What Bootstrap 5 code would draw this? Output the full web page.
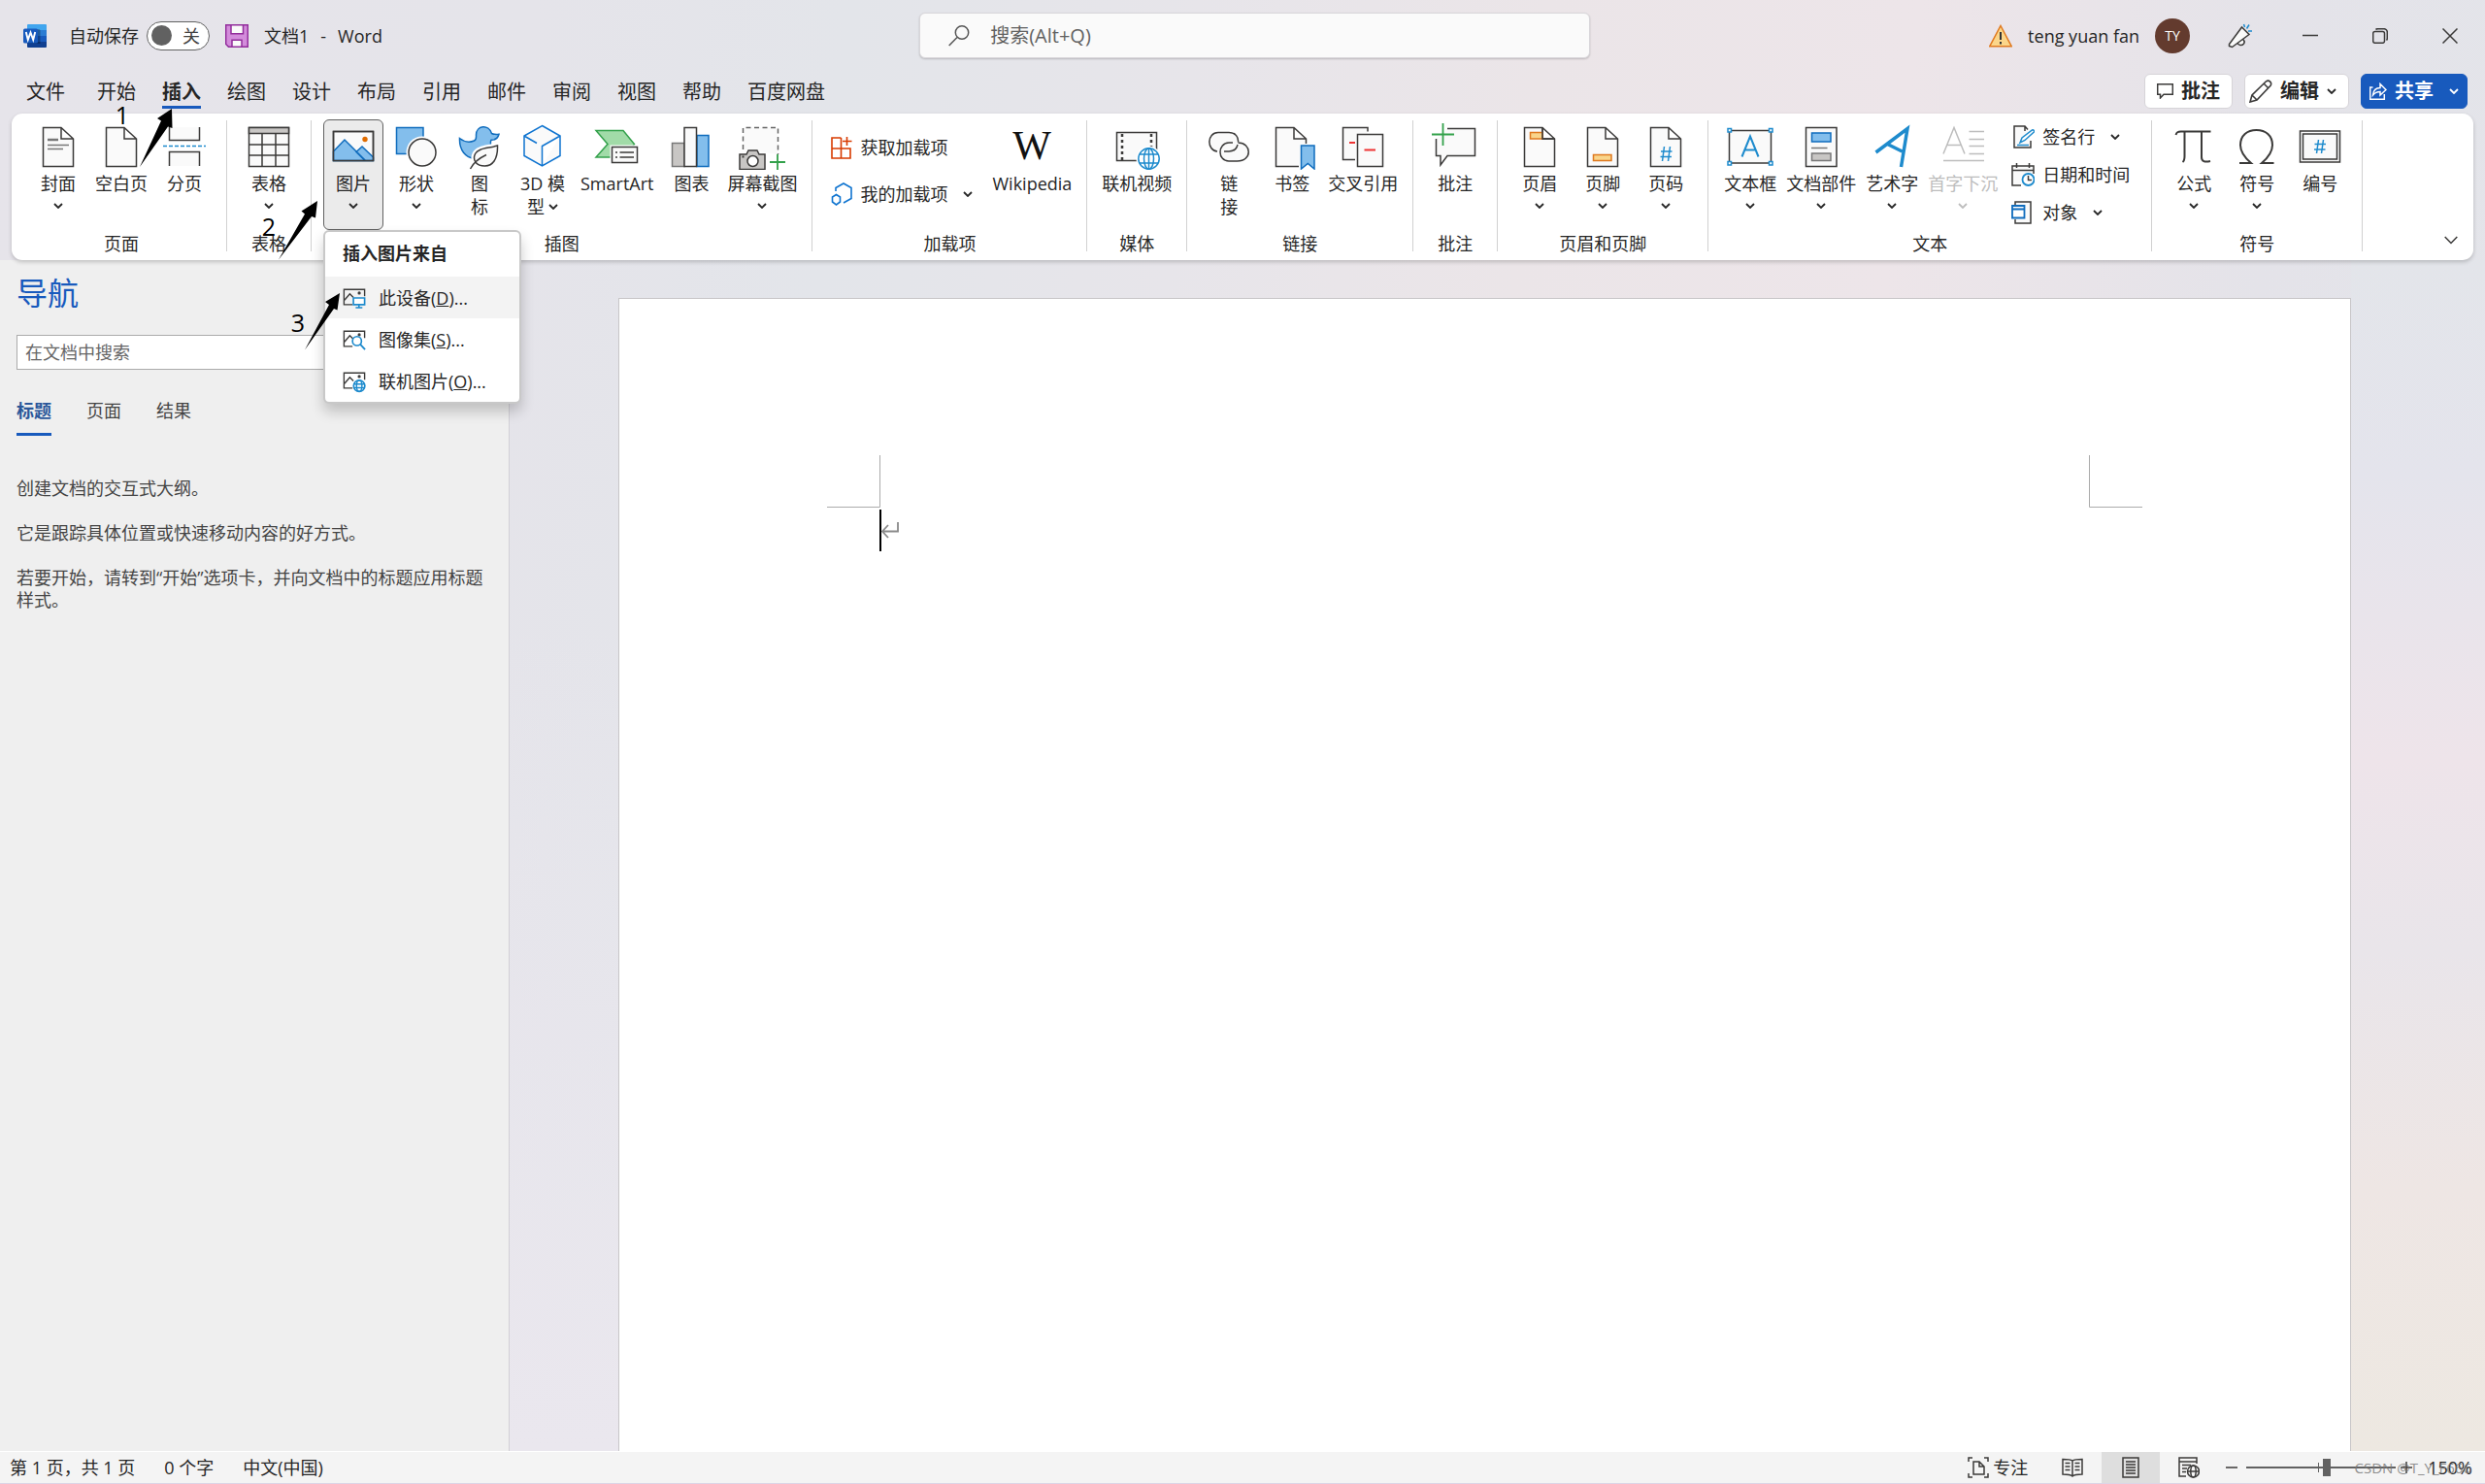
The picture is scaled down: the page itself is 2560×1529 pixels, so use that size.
<!DOCTYPE html>
<html lang="zh-CN">
<head>
<meta charset="utf-8">
<meta name="viewport" content="width=device-width, initial-scale=1">
<title>文档1 - Word</title>
<link href="https://cdn.jsdelivr.net/npm/bootstrap@5.3.0/dist/css/bootstrap.min.css" rel="stylesheet">
<style>
  :root { --ink:#262626; --brand:#185abd; --line:#3b3a39; --blue:#1e8bcd; --deep:#0f6cbd; }
  body {
    font-family:"Open Sans","Noto Sans CJK SC",sans-serif; font-size:18px; line-height:24px; color:var(--ink);
    background:linear-gradient(97deg,#e6e4ea 0,#e5e4ea 20%,#e3e5ea 32%,#e7e5ea 45%,#ebe5e8 58%,#ede5e9 72%,#e4e3e9 86%,#e3e5ea 100%);
  }
  svg { display:block; flex:none; fill:none; stroke:var(--line); stroke-width:1.5; }
  button { font:inherit; color:inherit; }
  a { color:inherit; text-decoration:none; }
  .plain { background:none; border:0; padding:0; }
  .chev { width:10px; height:6px; stroke:var(--ink); stroke-width:1.8; }

  /* title bar */
  .titlebar { height:73px; }
  .tb-left { width:37%; padding-left:24px; }
  .tb-left .lbl { margin-left:23px; }
  .tb-search { width:27%; height:47px; background:#fafafa; border:1px solid #d8d6da; border-radius:6px; box-shadow:0 1px 2px #0003; padding-left:29px; gap:19px; }
  .tb-search input { font-size:20px; background:none; border:0; outline:0; color:var(--ink); }
  .tb-search input::placeholder { color:#616161; opacity:1; }
  .pill { width:65px; height:30px; border:1px solid #616161; border-radius:15px; background:#fff; padding:0 9px 0 4px; color:#424242; }
  .pill input { appearance:none; width:21px; height:21px; border-radius:50%; background:#616161; margin:0; }
  .avatar { width:36px; height:36px; border-radius:50%; background:#633b2e; color:#fff; font-size:14px; }
  .winbtn { width:72px; height:48px; }

  /* tabs */
  .tabs { height:44px; padding:0 18px 0 27px; font-size:20px; }
  .tabs nav { gap:27px; }
  .tabs nav a { height:39px; line-height:43px; white-space:nowrap; }
  .tabs nav a:first-child { margin-right:6px; }
  .tabs nav a.on { font-weight:700; border-bottom:3px solid var(--brand); }
  .acts { gap:12px; padding-top:3px; }
  .actbtn { height:36px; background:#fff; border:1px solid #d6d4d8; border-radius:6px; font-size:20px; font-weight:700; line-height:32px; }
  .actbtn.share { background:var(--brand); border-color:var(--brand); color:#fff; }
  .share svg { stroke:#fff; }

  /* ribbon */
  .ribbon { margin:0 12px; background:#fff; border-radius:11px; box-shadow:0 2px 4px #0003; padding-left:5px; height:151px; z-index:2; }
  .grp { padding:6px 12px 0; border-right:1px solid transparent; position:relative; }
  .grp::after { content:""; position:absolute; right:-1px; top:7px; bottom:9px; width:1px; background:#d1d1d1; }
  .items { gap:3px; height:114px; }
  .grp-name { margin-top:2px; text-align:center; }
  .big { min-width:62px; height:114px; padding:3px 2px 0; border:1px solid transparent; border-radius:6px; background:none; white-space:nowrap; display:flex; flex-direction:column; align-items:center; }
  .big > svg:first-child { width:48px; height:48px; margin-bottom:2px; }
  .big .chev { margin-top:8px; }
  .big.open { background:#ebebeb; border-color:#616161; }
  .big:disabled { color:#bdbdbd; }
  .big:disabled svg { stroke:#bdbdbd; }
  .addins { width:167px; padding:17px 0 0 7px; gap:24px; }
  .texttools { width:140px; padding:6px 0 0 8px; gap:15px; }
  .picmenu { min-width:204px; padding:0; border:2px solid #c8c8c8; border-radius:6px; box-shadow:0 8px 14px #0003; font-size:18px; margin:0; overflow:hidden; }
  .picmenu h6 { font-size:18px; line-height:24px; font-weight:700; color:var(--ink); margin:0; padding:10px 18px 12px; }
  .picmenu .dropdown-item { height:43px; padding:0 18px; gap:13px; color:var(--ink); }
  .picmenu .dropdown-item.hot { background:#f3f3f3; }

  /* navigation pane */
  .navpane { width:525px; background:#efefef; border-right:1px solid #d2d0d6; padding:14px 17px 0; color:#444; }
  .navpane h2 { font-size:32px; line-height:40px; color:var(--brand); margin:0 0 23px; font-weight:400; }
  .navpane input { height:36px; border:1px solid #ababab; background:#fff; padding:0 8px; width:100%; font-size:18px; outline:0; border-radius:0; }
  .navpane input::placeholder { color:#666; opacity:1; }
  .ptabs { gap:36px; margin:30px 0 43px; }
  .ptabs a { padding:0 0 11px; border-bottom:3px solid transparent; }
  .ptabs a.on { color:#2b579a; font-weight:700; border-color:var(--brand); }
  .navpane p { line-height:23px; margin:0 0 23px; }

  /* document */
  .canvas { padding:39px 138px 0 112px; background:linear-gradient(#e3e5ea 0,#e4e4ec 18%,#eee4ea 42%,#e9e5ea 58%,#eee6e4 78%,#ede8e1 100%) right/138px 100% no-repeat,linear-gradient(#e4e3ea00 30%,#eae7ee) left/112px 100% no-repeat; }
  .sheet { background:#fff; border:1px solid #c8c6c8; border-bottom:0; padding:161px 214px 0; }
  .caretline { padding-left:54px; margin-top:2px; }
  .caret { width:2px; height:43px; background:#000; }

  /* status bar */
  .status { height:34px; background:#f4f4f4; border-top:1px solid #fff; border-bottom:1px solid #ddd5e6; padding:0 13px 0 10px; }
  .counts { gap:30px; }
  .viewbtn { width:60px; height:32px; display:flex; align-items:center; justify-content:center; }
  .viewbtn.on { background:#dedede; }
  .zoomer { appearance:none; width:154px; height:18px; background:linear-gradient(#616161,#616161) 74px 50%/1px 10px no-repeat,linear-gradient(#616161,#616161) 0 50%/100% 2px no-repeat; margin:0 5px 0 9px; }
  .zoomer::-webkit-slider-thumb { appearance:none; width:8px; height:18px; background:#616161; border-radius:0; }
  .credit { right:14px; bottom:4px; font-size:15px; line-height:24px; color:#777; opacity:.8; z-index:5; }

  /* step annotations, drawn over the window */
  .notes { inset:0; z-index:2000; pointer-events:none; }
  .notes svg { position:absolute; left:0; top:0; }
  .step { position:absolute; font-size:25px; line-height:30px; color:#000; width:20px; text-align:center; }
  .s1 { left:116px; top:103px; } .s2 { left:267px; top:218px; } .s3 { left:297px; top:317px; }
</style>
<script src="https://cdn.jsdelivr.net/npm/bootstrap@5.3.0/dist/js/bootstrap.bundle.min.js"></script>
</head>
<body>
<svg width="0" height="0" class="position-absolute" aria-hidden="true">
  <symbol id="chev" viewBox="0 0 10 6"><path d="M1 1l4 4 4-4"/></symbol>
  <symbol id="sheet" viewBox="0 0 48 48"><path fill="#fafafa" d="M8.500 4.500H27L39.500 16V44.500H8.500zM27 4.500V16H39.500"/></symbol>
  <symbol id="photo" viewBox="0 0 26 24"><path d="M11 19.500H1.500V2.500H24.500V10M2 14.500l6-7 4 4"/><circle cx="18.500" cy="6.500" r="1" fill="#3b3a39"/></symbol>
</svg>

<div class="d-flex flex-column min-vh-100 position-relative">
  <header class="titlebar d-flex align-items-center">
    <div class="tb-left d-flex align-items-center">
      <svg width="24" height="24" viewBox="0 0 24 24" style="stroke:none"><path fill="#41a5ee" d="M5 0h18a1 1 0 0 1 1 1v5H4V1a1 1 0 0 1 1-1z"/><path fill="#2b7cd3" d="M4 6h20v6H4z"/><path fill="#185abd" d="M4 12h20v6H4z"/><path fill="#103f91" d="M4 18h20v5a1 1 0 0 1-1 1H5a1 1 0 0 1-1-1z"/><path fill="#0004" d="M4 5h12a1.500 1.500 0 0 1 1.500 1.500V20H4z"/><rect y="4.500" width="15" height="15" rx="1.500" fill="#185abd"/><path d="M2.800 8l2 8 2.700-7.500L10.200 16l2-8" stroke="#fff" stroke-width="1.900"/></svg>
      <span class="lbl">自动保存</span>
      <label class="pill d-flex align-items-center justify-content-between ms-2"><input type="checkbox" role="switch" aria-label="自动保存">关</label>
      <button class="plain ms-3" aria-label="保存" title="保存"><svg width="24" height="24" viewBox="0 0 24 24" style="stroke:#922d9c"><path fill="#d38cdb" d="M.7.7h22.600v22.600H3.500L.7 20.500z"/><path fill="#fafafa" d="M6 .7h12.500v9H6zM7 23.300v-7h10v7z"/></svg></button>
      <span class="ms-3">文档1</span><span class="mx-2 px-1">-</span><span>Word</span>
    </div>
    <div class="tb-search d-flex align-items-center">
      <svg width="22" height="22" viewBox="0 0 22 22" style="stroke:#555"><circle cx="14" cy="7.500" r="6.700"/><path d="M9 12.500L.7 21"/></svg>
      <input class="flex-fill" type="search" placeholder="搜索(Alt+Q)" aria-label="搜索">
    </div>
    <div class="flex-fill d-flex align-items-center justify-content-end">
      <svg width="24" height="24" viewBox="0 0 24 24" style="stroke:#e07a1f"><path fill="#fbd68a" d="M12 1.500L23.200 22.700H.8z"/><path d="M12 8v8M12 18v2.400" style="stroke:#333" stroke-width="2"/></svg>
      <span class="ms-3 me-3">teng yuan fan</span>
      <span class="avatar d-flex align-items-center justify-content-center">TY</span>
      <button class="plain winbtn ms-3 d-flex align-items-center justify-content-center" aria-label="新增功能"><svg width="26" height="26" viewBox="0 0 26 26"><path fill="#fafafa" d="M14.500 4l7.500 7.500L4.500 24.500l-3-1 0-2zM10 20c1 3 4.500 3.500 6.500 1 1-1.500.5-3.500-1-4.500"/><path style="stroke:var(--blue)" d="M16.500 1l1 3M22 1.500l-2.500 4M25 8h-4"/></svg></button>
      <button class="plain winbtn d-flex align-items-center justify-content-center" aria-label="最小化"><svg width="16" height="16" viewBox="0 0 16 16"><path d="M0 7.500h16"/></svg></button>
      <button class="plain winbtn d-flex align-items-center justify-content-center" aria-label="还原"><svg width="16" height="16" viewBox="0 0 16 16"><rect x=".7" y="3.500" width="11.800" height="11.800" rx="2"/><path d="M3.500 1.500C4 .9 4.500.7 5.500.7H12a3.300 3.300 0 0 1 3.300 3.300v6.500c0 1-.3 1.500-.8 2"/></svg></button>
      <button class="plain winbtn d-flex align-items-center justify-content-center" aria-label="关闭"><svg width="16" height="16" viewBox="0 0 16 16"><path d="M.5.5l15 15M15.500.5l-15 15"/></svg></button>
    </div>
  </header>

  <div class="tabs d-flex justify-content-between">
    <nav class="d-flex">
      <a href="#">文件</a><a href="#">开始</a><a href="#" class="on">插入</a><a href="#">绘图</a><a href="#">设计</a><a href="#">布局</a><a href="#">引用</a><a href="#">邮件</a><a href="#">审阅</a><a href="#">视图</a><a href="#">帮助</a><a href="#">百度网盘</a>
    </nav>
    <div class="acts d-flex align-items-start">
      <button class="actbtn d-flex align-items-center px-2 gap-2"><svg class="ms-1" width="17" height="16" viewBox="0 0 17 16"><path d="M.7.7h15.600v10.600H7L3.500 15v-3.700H.7z"/></svg><span class="me-1">批注</span></button>
      <button class="actbtn d-flex align-items-center gap-2 px-1"><svg width="24" height="24" viewBox="0 0 24 24"><path stroke-width="1.600" d="M1 23l2-7L17.500 1.800c3-2 6.500 1.500 4.500 4.500L8 21zM3 16l5 5M15 4l5 5"/></svg><span>编辑</span><svg class="chev me-2"><use href="#chev"/></svg></button>
      <button class="actbtn share d-flex align-items-center gap-2 px-1"><svg class="ms-1" width="18" height="18" viewBox="0 0 18 18"><path d="M3.500 5H.7v12.300h14.600V12M3.500 13c.5-5 3-7.500 7.500-7.500V1.500L17 7.500l-6 5.500V9.500c-3.500 0-5.500 1-7.500 3.500z"/></svg><span>共享</span><svg class="chev ms-2 me-1"><use href="#chev"/></svg></button>
    </div>
  </div>

  <div class="ribbon d-flex position-relative">
    <section class="grp"><div class="items d-flex">
      <button class="big"><svg viewBox="0 0 48 48"><use href="#sheet"/><path d="M13 17h11" style="stroke:#777" stroke-width="2.500"/><path style="stroke:#777" d="M13 22.500h22M13 26.500h16"/></svg>封面<svg class="chev"><use href="#chev"/></svg></button>
      <button class="big"><svg viewBox="0 0 48 48"><use href="#sheet"/></svg>空白页</button>
      <button class="big"><svg viewBox="0 0 48 48"><path fill="#fafafa" d="M8.500 4v13.500h31V4M8.500 44V29.500h31V44"/><path d="M2 23.500h44" style="stroke:var(--blue)" stroke-dasharray="4 2"/></svg>分页</button>
    </div><div class="grp-name">页面</div></section>

    <section class="grp"><div class="items d-flex">
      <button class="big"><svg viewBox="0 0 48 48"><path fill="#fafafa" d="M3.500 4.500h41v40h-41z"/><path fill="#c8c6c4" d="M3.500 4.500h41v6h-41z"/><path d="M3.500 22h41M3.500 33h41M17 10.500v34M31 10.500v34"/></svg>表格<svg class="chev"><use href="#chev"/></svg></button>
    </div><div class="grp-name">表格</div></section>

    <section class="grp"><div class="items d-flex">
      <div class="dropdown position-relative">
        <button class="big open" aria-expanded="true"><svg viewBox="0 0 48 48"><path fill="#fafafa" d="M3.500 8.500h41v30h-41z"/><path fill="#83beec" style="stroke:var(--deep)" d="M3.500 29L15 17l21.500 21.500h-33zM27 29.500l6-5.500 11.500 11v3.500h-8.500z"/><path d="M3.500 8.500h41v30h-41z"/><circle cx="36" cy="16.500" r="2.700" fill="#e06c00" style="stroke:none"/></svg>图片<svg class="chev"><use href="#chev"/></svg></button>
        <div class="dropdown-menu show picmenu top-100 start-0">
          <h6>插入图片来自</h6>
          <a class="dropdown-item hot d-flex align-items-center" href="#"><svg width="24" height="24" viewBox="0 0 26 24"><use href="#photo"/><path fill="#fff" style="stroke:var(--blue)" stroke-width="1.800" d="M12 12h12.500v7.500H12zM18.200 19.500v3M14.500 22.800h7.500"/></svg><span>此设备(<u>D</u>)...</span></a>
          <a class="dropdown-item d-flex align-items-center" href="#"><svg width="24" height="24" viewBox="0 0 26 24"><use href="#photo"/><circle cx="16" cy="13.500" r="5" fill="#fff" style="stroke:var(--blue)" stroke-width="1.800"/><path style="stroke:var(--blue)" stroke-width="2" d="M19.500 17l5.500 6"/></svg><span>图像集(<u>S</u>)...</span></a>
          <a class="dropdown-item d-flex align-items-center" href="#"><svg width="24" height="24" viewBox="0 0 26 24"><use href="#photo"/><g style="stroke:var(--blue)"><circle cx="18.500" cy="17" r="6.300" fill="#fff" stroke-width="1.800"/><path d="M12.500 15h12M12.500 19h12"/><ellipse cx="18.500" cy="17" rx="3" ry="6.300"/></g></svg><span>联机图片(<u>O</u>)...</span></a>
        </div>
      </div>
      <button class="big"><svg viewBox="0 0 48 48"><path fill="#83beec" style="stroke:var(--deep)" d="M3.500 4.500h27.500v27h-27.500z"/><circle cx="30" cy="30" r="16.500" fill="#fff" style="stroke:none"/><circle cx="30" cy="30" r="14" fill="#fafafa"/></svg>形状<svg class="chev"><use href="#chev"/></svg></button>
      <button class="big"><svg viewBox="0 0 48 48"><path fill="#83beec" style="stroke:var(--deep)" d="M3.500 15.500c5 4 10 4.500 15 2.500 2.500-1 2-3 2-6 0-10 13-11.500 16-1.500 2.500 1.200 5 1.200 7.500.8-1 4-4 6-8 6-1.500 2.500 0 5 0 9-2 7-10 10-18 10-8-1-15-8-14.500-20.800z"/><path fill="#fff" style="stroke:#fff" stroke-width="6" d="M42.500 23c.5 14-5 21-13 21-9 0-13-6-10-12.500 3-6 13-5.500 23-8.500z"/><path fill="#fafafa" d="M42.500 23c.5 14-5 21-13 21-9 0-13-6-10-12.500 3-6 13-5.500 23-8.500zM14.500 47c3-6 9-11 16.500-14.500"/></svg>图<br>标</button>
      <button class="big"><svg viewBox="0 0 48 48"><path fill="#fafafa" style="stroke:#0f74d0" d="M23.500 2.500L42 13v20.500L23.500 44 5 33.500V13zM42 13L23.500 23.500V44M5 13l13 7.500"/></svg>3D 模<span class="d-flex align-items-center gap-1">型<svg class="chev mt-0"><use href="#chev"/></svg></span></button>
      <button class="big px-1"><svg viewBox="0 0 48 48"><path fill="#a1dba8" style="stroke:#33a14b" d="M2 7.500h28l11.500 14L31 35H2l12-13.500z"/><path fill="#fff" style="stroke:#fff" stroke-width="4" d="M18.500 24.500h26v16h-26z"/><path fill="#fafafa" d="M18.500 24.500h26v16h-26zM22 30h2M26.500 30H41M22 35h2M26.500 35H41"/></svg>SmartArt</button>
      <button class="big"><svg viewBox="0 0 48 48"><path fill="#c8c6c4" style="stroke:#777" d="M4.500 20.500h12.500v24H4.500z"/><path fill="#83beec" style="stroke:var(--deep)" d="M30 12.500h12v32H30z"/><path fill="#fafafa" d="M17 4.500h12.500v40H17z"/></svg>图表</button>
      <button class="big"><svg viewBox="0 0 48 48"><path fill="#fafafa" style="stroke:#666" stroke-dasharray="5 3.500" d="M4.500 27V4.500h36V32"/><path fill="#c8c6c4" d="M1 32h7l2-4h9l2 4h6v15.500H1z"/><circle cx="14.500" cy="39" r="5.500" fill="#fff"/><path d="M3.500 34.500h2" stroke-width="2"/><path style="stroke:#33a14b" stroke-width="1.800" d="M40 32v16M32 40h16"/></svg>屏幕截图<svg class="chev"><use href="#chev"/></svg></button>
    </div><div class="grp-name">插图</div></section>

    <section class="grp"><div class="items d-flex">
      <div class="addins d-flex flex-column">
        <button class="plain d-flex align-items-center gap-2 text-nowrap"><svg width="22" height="24" viewBox="0 0 22 24" style="stroke:#d83b01"><path stroke-width="1.600" d="M10.500 2H1v21h19V13H1M10.500 2v21M16.500 1v9M12 5.500h9.500"/></svg>获取加载项</button>
        <button class="plain d-flex align-items-center gap-2 text-nowrap"><svg width="22" height="24" viewBox="0 0 22 24" style="stroke:#0f74d0"><path stroke-width="1.600" d="M5 9V5.500L13 1l8 4.500v11L13 21M5.500 12.500l4 2.500v5l-4 3-4-3v-5z"/></svg>我的加载项<svg class="chev ms-2"><use href="#chev"/></svg></button>
      </div>
      <button class="big"><svg viewBox="0 0 48 48"><text x="24" y="37" text-anchor="middle" font-family="Liberation Serif" font-size="42" fill="#111" style="stroke:none">W</text></svg>Wikipedia</button>
    </div><div class="grp-name">加载项</div></section>

    <section class="grp"><div class="items d-flex">
      <button class="big"><svg viewBox="0 0 48 48"><path fill="#fafafa" d="M3.500 9.500h41v29h-41z"/><path stroke-width="2.500" stroke-dasharray="3 3" d="M9 11v27M39 11v18"/><circle cx="36.500" cy="36.500" r="13" fill="#fff" style="stroke:none"/><g style="stroke:var(--blue)"><circle cx="36.500" cy="36.500" r="10.700"/><ellipse cx="36.500" cy="36.500" rx="5" ry="10.700"/><path d="M27 32h19M27 41h19M36.500 26v21"/></g></svg>联机视频</button>
    </div><div class="grp-name">媒体</div></section>

    <section class="grp"><div class="items d-flex">
      <button class="big"><svg viewBox="0 0 48 48"><path fill="#fafafa" d="M12 29c-11-1-11-19.500 1-19.500h11c7 0 10 5 9.500 10M33.500 20c14 0 15 19-1 19H24c-12 0-12-18.500 0-19M33 22c-1 4-4 7-9 7h-5M24 20h4"/></svg>链<br>接</button>
      <button class="big"><svg viewBox="0 0 48 48"><path fill="#fafafa" d="M31 44.500H7.500V4.500H26L38.500 16v5M26 4.500V16h12.500"/><path fill="#83beec" style="stroke:var(--deep)" d="M33.500 23h13.500v24l-6.700-5.500L33.500 47z"/></svg>书签</button>
      <button class="big"><svg viewBox="0 0 48 48"><path fill="#fafafa" d="M16 37.500H3.500V4.500h25.500v4M18.500 11.500h26v33h-26z"/><path style="stroke:#e33" stroke-width="1.800" d="M10 20h6M25.500 27.500H37"/></svg>交叉引用</button>
    </div><div class="grp-name">链接</div></section>

    <section class="grp"><div class="items d-flex">
      <button class="big"><svg viewBox="0 0 48 48"><path fill="#fafafa" d="M16 5.500h28.500v28H16L9 43V33.500H4.500V16"/><path style="stroke:#33a14b" stroke-width="1.800" d="M11.500 0v23M0 11.500h23"/></svg>批注</button>
    </div><div class="grp-name">批注</div></section>

    <section class="grp"><div class="items d-flex">
      <button class="big"><svg viewBox="0 0 48 48"><use href="#sheet"/><path fill="#f9d58b" style="stroke:#e07a1f" d="M14.500 9.500H27v6.500H14.500z"/><path d="M27 4.500V16h12.500"/></svg>页眉<svg class="chev"><use href="#chev"/></svg></button>
      <button class="big"><svg viewBox="0 0 48 48"><use href="#sheet"/><path fill="#f9d58b" style="stroke:#e07a1f" d="M14.500 32.500h18.500v6H14.500z"/></svg>页脚<svg class="chev"><use href="#chev"/></svg></button>
      <button class="big"><svg viewBox="0 0 48 48"><use href="#sheet"/><path style="stroke:var(--blue)" d="M22.500 24l-2 15M28.500 24l-2 15M19 29h11.500M18.500 34.500H30"/></svg>页码<svg class="chev"><use href="#chev"/></svg></button>
    </div><div class="grp-name">页眉和页脚</div></section>

    <section class="grp"><div class="items d-flex">
      <button class="big"><svg viewBox="0 0 48 48"><path fill="#fafafa" d="M2.500 7.500h43v33.500h-43z"/><g style="stroke:var(--blue)"><path stroke-width="2" d="M15.500 34.500l8.500-21 8.500 21M18.500 27.500h11"/><path fill="#fff" d="M1 5.500h3.500V9H1zM43.500 5.500H47V9h-3.500zM1 39.500h3.500V43H1zM43.500 39.500H47V43h-3.500z"/></g></svg>文本框<svg class="chev"><use href="#chev"/></svg></button>
      <button class="big"><svg viewBox="0 0 48 48"><path fill="#fafafa" d="M8.500 4.500h31.500v40H8.500z"/><path fill="#83beec" style="stroke:var(--deep)" d="M14.500 10h19.500v9H14.500z"/><path fill="#c8c6c4" style="stroke:#777" d="M14.500 31h19.500v7.500H14.500zM14 25.500h16.500"/></svg>文档部件<svg class="chev"><use href="#chev"/></svg></button>
      <button class="big"><svg viewBox="0 0 48 48"><path style="stroke:var(--blue)" stroke-width="3.500" d="M7.500 30L40 5.500 33.500 45M19.500 21.500l15 7.500"/></svg>艺术字<svg class="chev"><use href="#chev"/></svg></button>
      <button class="big" disabled><svg viewBox="0 0 48 48"><path d="M4 31.500L15 4.500l11 27M8 22.500h14M30.500 8.500H46M30.500 16.500H46M30.500 23.500H46M30.500 31.500H46M4 38.500h42"/></svg>首字下沉<svg class="chev"><use href="#chev"/></svg></button>
      <div class="texttools d-flex flex-column">
        <button class="plain d-flex align-items-center gap-2 text-nowrap"><svg width="24" height="24" viewBox="0 0 24 24"><path fill="#fafafa" d="M20 16v7H3V1h11l3 3.500M14 1v5"/><path fill="#fff" style="stroke:var(--blue)" d="M9 18l2-5L21.500 5c1.500-.5 2.500.8 1.800 2L14 15.500zM6 20.500h12"/></svg>签名行<svg class="chev ms-2"><use href="#chev"/></svg></button>
        <button class="plain d-flex align-items-center gap-2 text-nowrap"><svg width="24" height="24" viewBox="0 0 24 24"><path fill="#fafafa" d="M10 23H1V3h22v8M1 7.500h22M5.500 0v5M18.500 0v5"/><circle cx="17.500" cy="17" r="6" fill="#fff" style="stroke:var(--blue)" stroke-width="1.800"/><path d="M17.500 13v4.500H21"/></svg>日期和时间</button>
        <button class="plain d-flex align-items-center gap-2 text-nowrap"><svg width="24" height="24" viewBox="0 0 24 24"><path fill="#fafafa" d="M4 4V1h16v22H4v-4"/><path fill="#fff" style="stroke:var(--deep)" stroke-width="1.800" d="M1 5h12.500v12.500H1zM1 8.500h12.500"/></svg>对象<svg class="chev ms-2"><use href="#chev"/></svg></button>
      </div>
    </div><div class="grp-name">文本</div></section>

    <section class="grp"><div class="items d-flex">
      <button class="big"><svg viewBox="0 0 48 48"><path stroke-width="2" d="M5.500 12c1-3 2-3.500 5-3.500h31M14.500 9v25c0 3-.5 5-2 6M32 9v26c0 4 3 5.500 9 4"/></svg>公式<svg class="chev"><use href="#chev"/></svg></button>
      <button class="big"><svg viewBox="0 0 48 48"><path stroke-width="2" d="M6 41h12c-7-6-11-12-11-18.500C7 12.500 14 7 23.500 7S40 12.500 40 22.500C40 29 36 35 29 41h12.500"/></svg>符号<svg class="chev"><use href="#chev"/></svg></button>
      <button class="big"><svg viewBox="0 0 48 48"><path fill="#fafafa" d="M3.500 8h41v32h-41zM6.500 11h35v26h-35z"/><path style="stroke:var(--blue)" d="M22.500 17l-2 14M27.500 17l-2 14M18.500 21.500H30M18 27h11.500"/></svg>编号</button>
    </div><div class="grp-name">符号</div></section>
    <button class="plain ms-auto align-self-end pb-3 me-3" aria-label="折叠功能区"><svg width="14" height="9" viewBox="0 0 14 9"><path d="M.7 1L7 7.500 13.300 1"/></svg></button>
  </div>

  <main class="flex-fill d-flex">
    <aside class="navpane flex-shrink-0">
      <h2>导航</h2>
      <input type="search" placeholder="在文档中搜索" aria-label="在文档中搜索">
      <div class="ptabs d-flex"><a href="#" class="on">标题</a><a href="#">页面</a><a href="#">结果</a></div>
      <p>创建文档的交互式大纲。</p>
      <p>它是跟踪具体位置或快速移动内容的好方式。</p>
      <p>若要开始，请转到“开始”选项卡，并向文档中的标题应用标题样式。</p>
    </aside>
    <div class="canvas flex-fill d-flex">
      <div class="sheet flex-fill">
        <div class="d-flex justify-content-between">
          <svg width="55" height="54" viewBox="0 0 55 54" style="stroke:#ababab"><path stroke-width="1" d="M0 53.500h54.500V0"/></svg>
          <svg width="55" height="54" viewBox="0 0 55 54" style="stroke:#ababab"><path stroke-width="1" d="M.5 0v53.500H55"/></svg>
        </div>
        <div class="caretline d-flex">
          <span class="caret"></span>
          <svg width="18" height="16" viewBox="0 0 18 16" class="mt-2 pt-1" style="stroke:#8a8a8a;height:22px"><path stroke-width="1.800" d="M17 0v9.500H1M7 3L1 9.500 7 16"/></svg>
        </div>
      </div>
    </div>
  </main>

  <footer class="status d-flex align-items-center justify-content-between position-relative">
    <div class="counts d-flex"><span>第 1 页，共 1 页</span><span>0 个字</span><span>中文(中国)</span></div>
    <div class="d-flex align-items-center">
      <button class="plain d-flex align-items-center gap-1 me-3"><svg width="22" height="22" viewBox="0 0 22 22"><path d="M5 1H1v4M17 1h4v4M5 21H1v-4M17 21h4v-4M6 5h6l5 5v8H6zM12 5v5h5"/></svg>专注</button>
      <button class="plain viewbtn" aria-label="阅读视图"><svg width="22" height="20" viewBox="0 0 22 20"><path d="M11 3C9 1.500 6 1.500 1 1.500V17c5 0 8 0 10 2 2-2 5-2 10-2V1.500c-5 0-8 0-10 1.500zM11 3v16M3.500 5.500H8.500M3.500 9H8.500M3.500 12.500H8.500M13.500 5.500h5M13.500 9h5M13.500 12.500h5"/></svg></button>
      <button class="plain viewbtn on" aria-label="页面视图"><svg width="18" height="22" viewBox="0 0 18 22"><path d="M1 1h16v20H1zM4 5h10M4 8h10M4 11h10M4 14h10M4 17h10"/></svg></button>
      <button class="plain viewbtn me-1" aria-label="Web 版式视图"><svg width="22" height="22" viewBox="0 0 22 22"><path d="M8 20H1V1h18v6M1 5h18M4 8.500h9M4 12h5M4 15.500h4"/><circle cx="15.500" cy="15" r="6"/><ellipse cx="15.500" cy="15" rx="2.700" ry="6"/><path d="M9.500 15h12"/></svg></button>
      <svg width="12" height="12" viewBox="0 0 12 12" class="ms-1"><path d="M0 6h12"/></svg>
      <input class="zoomer" type="range" min="0" max="100" value="54" aria-label="缩放">
      <svg width="12" height="12" viewBox="0 0 12 12"><path d="M0 6h12M6 0v12"/></svg>
      <span class="ms-3">150%</span>
    </div>
    <span class="credit position-absolute">CSDN @T_Y_F666</span>
  </footer>

  <div class="notes position-absolute overflow-hidden" aria-hidden="true">
    <svg width="400" height="400" viewBox="0 0 400 400" style="stroke:none;fill:#000"><path d="M177 112l-15 10 4 2.500L144 172l29-41.500 4.500 1.500zM327 207l-16.500 10.500 3.500 3L287 267.500 321 223l4 1.500zM350 302l-15 9 4 3L314 360.500 344 318l3.500 1.500z"/></svg>
    <span class="step s1">1</span><span class="step s2">2</span><span class="step s3">3</span>
  </div>
</div>
</body>
</html>
